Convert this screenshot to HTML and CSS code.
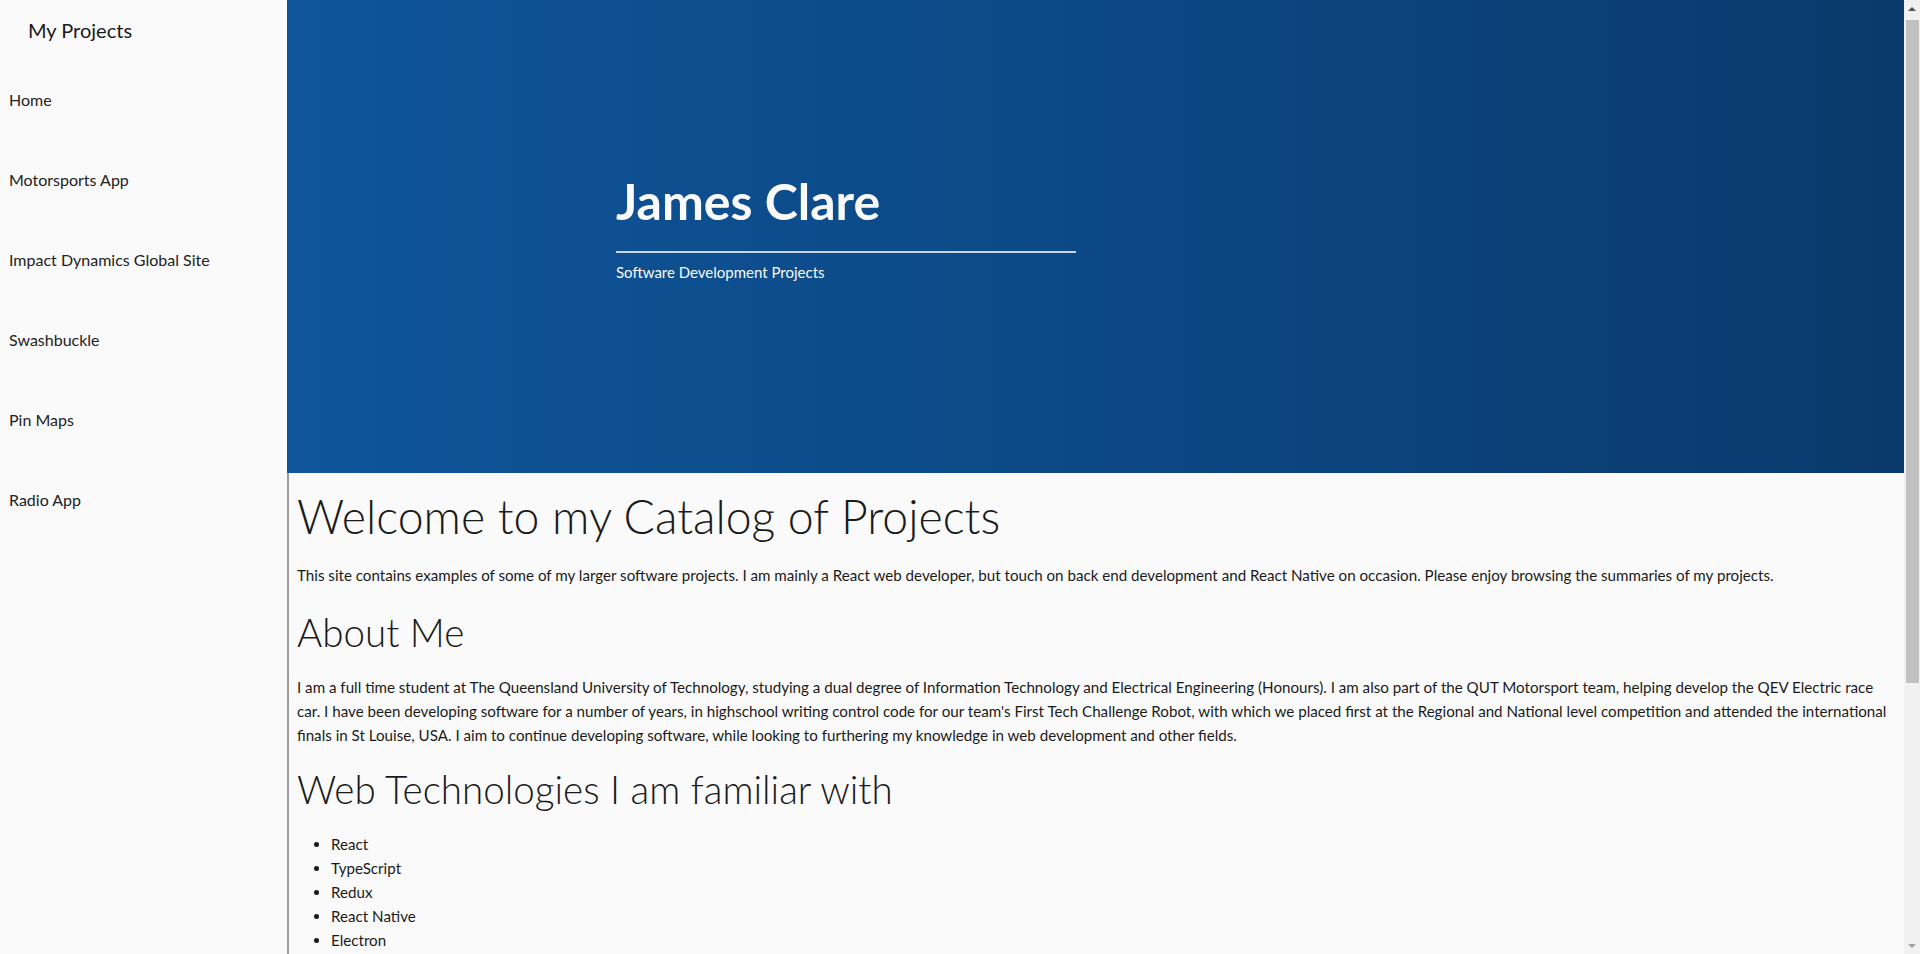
FILE: index.html
```html
<!DOCTYPE html>
<html lang="en">
<head>
<meta charset="utf-8">
<title>My Projects</title>
<link rel="stylesheet" href="styles.css">
</head>
<body>
<div class="app">
  <aside class="sidebar">
    <div class="brand">My Projects</div>
    <nav class="nav">
      <a class="nav-link" href="#">Home</a>
      <a class="nav-link" href="#">Motorsports App</a>
      <a class="nav-link" href="#">Impact Dynamics Global Site</a>
      <a class="nav-link" href="#">Swashbuckle</a>
      <a class="nav-link" href="#">Pin Maps</a>
      <a class="nav-link" href="#">Radio App</a>
    </nav>
  </aside>
  <main class="main">
    <header class="hero">
      <div class="hero-inner">
        <h1 class="hero-title">James Clare</h1>
        <hr class="hero-rule">
        <p class="hero-sub">Software Development Projects</p>
      </div>
    </header>
    <section class="content">
      <h1 class="page-title">Welcome to my Catalog of Projects</h1>
      <p class="intro">This site contains examples of some of my larger software projects. I am mainly a React web developer, but touch on back end development and React Native on occasion. Please enjoy browsing the summaries of my projects.</p>
      <h2 class="section-title">About Me</h2>
      <p class="about">I am a full time student at The Queensland University of Technology, studying a dual degree of Information Technology and Electrical Engineering (Honours). I am also part of the QUT Motorsport team, helping develop the QEV Electric race car. I have been developing software for a number of years, in highschool writing control code for our team's First Tech Challenge Robot, with which we placed first at the Regional and National level competition and attended the international finals in St Louise, USA. I aim to continue developing software, while looking to furthering my knowledge in web development and other fields.</p>
      <h2 class="section-title tech-title">Web Technologies I am familiar with</h2>
      <ul class="tech-list">
        <li>React</li>
        <li>TypeScript</li>
        <li>Redux</li>
        <li>React Native</li>
        <li>Electron</li>
      </ul>
    </section>
  </main>
</div>
<div class="scrollbar" aria-hidden="true">
  <div class="sb-btn sb-up"><span class="sb-arrow-up"></span></div>
  <div class="sb-track"><div class="sb-thumb"></div></div>
  <div class="sb-btn sb-down"><span class="sb-arrow-down"></span></div>
</div>
</body>
</html>
```
FILE: styles.css
```css
html, body {
  margin: 0;
  padding: 0;
}
html {
  overflow: hidden;
}
body {
  font-family: Lato, "Liberation Sans", sans-serif;
  font-size: 16px;
  line-height: 24px;
  color: #1a1a1a;
  background: #fafafa;
}
.app {
  display: flex;
  min-height: 1324px;
  margin-right: 16px;
}
.sidebar {
  width: 287px;
  flex: 0 0 287px;
  background: #fafafa;
}
.brand {
  padding: 15px 0 0 28px;
  font-size: 20px;
  line-height: 30px;
  color: #1a1a1a;
}
.nav {
  display: flex;
  flex-direction: column;
  margin-top: 15px;
}
.nav-link {
  display: block;
  padding: 28px 9px;
  color: #222;
  text-decoration: none;
}
.main {
  flex: 1;
  display: flex;
  flex-direction: column;
  min-width: 0;
}
.hero {
  height: 473px;
  box-sizing: border-box;
  background: linear-gradient(90deg, #0f5599 0%, #0c4885 50%, #0a3a6b 100%);
  padding: 171px 0 0 329px;
}
.hero-inner {
  width: 460px;
}
.hero-title {
  margin: 0;
  font-size: 50px;
  line-height: 60px;
  font-weight: 700;
  color: #fafafa;
}
.hero-rule {
  margin: 20px 0 0;
  border: 0;
  height: 2px;
  background: rgba(255, 255, 255, 0.78);
}
.hero-sub {
  margin: 7px 0 0;
  font-size: 15px;
  color: #fafafa;
}
.content {
  flex: 1;
  border-left: 2px solid #9c9c9c;
  padding: 14px 6px 0 8px;
  background: #fafafa;
  font-size: 15.15px;
}
.page-title {
  margin: 0 0 18px;
  font-size: 46.4px;
  line-height: 58px;
  font-weight: 300;
}
.section-title {
  margin: 0 0 19px;
  font-size: 38.6px;
  line-height: 48px;
  font-weight: 300;
}
.intro {
  margin: 0 0 21px;
}
.about {
  margin: 0 0 18px;
}
.tech-list {
  margin: 2px 0 0;
  padding-left: 34px;
}

/* window scrollbar drawn over the right edge */
.scrollbar {
  position: fixed;
  top: 0;
  right: 0;
  width: 16px;
  height: 100vh;
  background: #f1f1f1;
  display: flex;
  flex-direction: column;
}
.sb-btn {
  height: 17px;
  flex: 0 0 17px;
  display: flex;
  align-items: center;
  justify-content: center;
}
.sb-arrow-up,
.sb-arrow-down {
  width: 0;
  height: 0;
  border-left: 4px solid transparent;
  border-right: 4px solid transparent;
}
.sb-arrow-up {
  border-bottom: 4px solid #505050;
}
.sb-arrow-down {
  border-top: 4px solid #a3a3a3;
}
.sb-track {
  flex: 1;
  padding: 3px 1px 0 2px;
}
.sb-thumb {
  height: 663px;
  background: #c1c1c1;
}
```
